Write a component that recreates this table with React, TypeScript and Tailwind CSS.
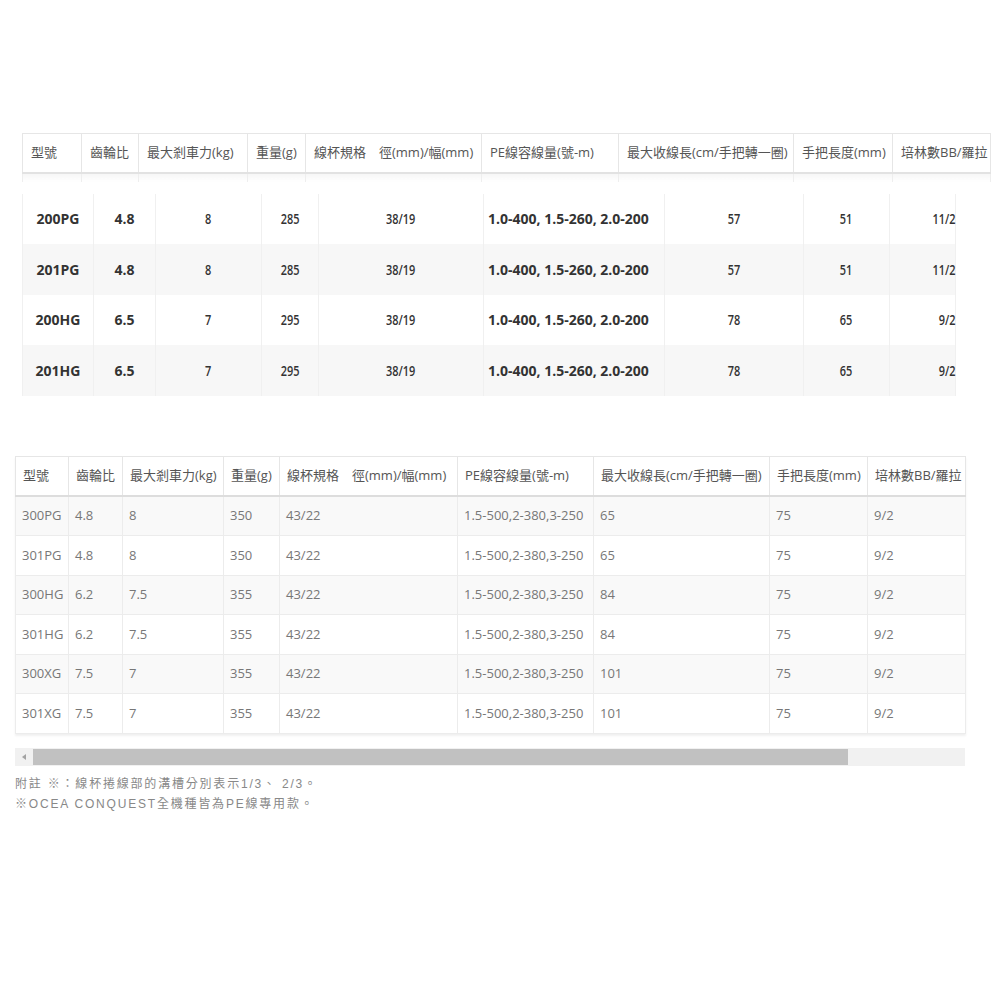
const cjk = "font-['Open_Sans','Noto_Sans_CJK_TC',sans-serif]"

const topHead = [
  { label: '型號', w: 'w-[59px]' },
  { label: '齒輪比', w: 'w-[57px]' },
  { label: '最大剎車力(kg)', w: 'w-[109px]' },
  { label: '重量(g)', w: 'w-[58px]' },
  { label: '線杯規格　徑(mm)/幅(mm)', w: 'w-[176px]' },
  { label: 'PE線容線量(號-m)', w: 'w-[137px]' },
  { label: '最大收線長(cm/手把轉一圈)', w: 'w-[175px]' },
  { label: '手把長度(mm)', w: 'w-[99px]' },
  { label: '培林數BB/羅拉', w: 'w-[98px]' },
]

const topCols = ['w-[71px]', 'w-[62px]', 'w-[106px]', 'w-[57px]', 'w-[165px]', 'w-[181px]', 'w-[139px]', 'w-[86px]', 'w-[66px]']

const topRows = [
  ['200PG', '4.8', '8', '285', '38/19', '1.0-400, 1.5-260, 2.0-200', '57', '51', '11/2'],
  ['201PG', '4.8', '8', '285', '38/19', '1.0-400, 1.5-260, 2.0-200', '57', '51', '11/2'],
  ['200HG', '6.5', '7', '295', '38/19', '1.0-400, 1.5-260, 2.0-200', '78', '65', '9/2'],
  ['201HG', '6.5', '7', '295', '38/19', '1.0-400, 1.5-260, 2.0-200', '78', '65', '9/2'],
]

const bottomHead = [
  { label: '型號', w: 'w-[53px]' },
  { label: '齒輪比', w: 'w-[54px]' },
  { label: '最大剎車力(kg)', w: 'w-[101px]' },
  { label: '重量(g)', w: 'w-[56px]' },
  { label: '線杯規格　徑(mm)/幅(mm)', w: 'w-[178px]' },
  { label: 'PE線容線量(號-m)', w: 'w-[136px]' },
  { label: '最大收線長(cm/手把轉一圈)', w: 'w-[176px]' },
  { label: '手把長度(mm)', w: 'w-[98px]' },
  { label: '培林數BB/羅拉', w: 'w-[98px]' },
]

const bottomRows = [
  ['300PG', '4.8', '8', '350', '43/22', '1.5-500,2-380,3-250', '65', '75', '9/2'],
  ['301PG', '4.8', '8', '350', '43/22', '1.5-500,2-380,3-250', '65', '75', '9/2'],
  ['300HG', '6.2', '7.5', '355', '43/22', '1.5-500,2-380,3-250', '84', '75', '9/2'],
  ['301HG', '6.2', '7.5', '355', '43/22', '1.5-500,2-380,3-250', '84', '75', '9/2'],
  ['300XG', '7.5', '7', '355', '43/22', '1.5-500,2-380,3-250', '101', '75', '9/2'],
  ['301XG', '7.5', '7', '355', '43/22', '1.5-500,2-380,3-250', '101', '75', '9/2'],
]

function Narrow({ children }: { children: string }) {
  return <span className="inline-block scale-x-[0.78] font-semibold">{children}</span>
}

function TopTable() {
  return (
    <div className="ml-[22px] w-[968px]">
      <table className={`w-full table-fixed border-collapse ${cjk} text-[13px] text-[#555]`}>
        <colgroup>
          {topHead.map(h => (
            <col key={h.label} className={h.w} />
          ))}
        </colgroup>
        <thead>
          <tr className="h-[39px] border-t border-[#e6e6e6] border-b-2 border-b-[#e2e2e2]">
            {topHead.map(h => (
              <th key={h.label} className="border-x border-[#e6e6e6] pl-2 text-left font-normal whitespace-nowrap">
                {h.label}
              </th>
            ))}
          </tr>
        </thead>
        <tbody>
          <tr className="h-[9px]">
            {topHead.map(h => (
              <td key={h.label} className="border-x border-[#eeeeee] bg-gradient-to-b from-[#f6f6f6] to-white" />
            ))}
          </tr>
        </tbody>
      </table>

      <table className={`mt-[12px] w-[933px] table-fixed border-collapse ${cjk} text-[14px] text-[#333]`}>
        <colgroup>
          {topCols.map((w, i) => (
            <col key={i} className={w} />
          ))}
        </colgroup>
        <tbody>
          {topRows.map((row, r) => (
            <tr key={row[0]} className={`h-[50.5px] ${r % 2 === 1 ? 'bg-[#f7f7f7]' : 'bg-white'}`}>
              {row.map((cell, c) => {
                const border = 'border-x border-[#f0f0f0]'
                if (c === 0 || c === 1)
                  return (
                    <td key={c} className={`${border} text-center font-bold`}>
                      {cell}
                    </td>
                  )
                if (c === 5)
                  return (
                    <td key={c} className={`${border} pl-1 text-left font-bold whitespace-nowrap`}>
                      {cell}
                    </td>
                  )
                if (c === 8)
                  return (
                    <td key={c} className={`${border} pr-0 text-right`}>
                      <span className="inline-block origin-right scale-x-[0.78] font-semibold">{cell}</span>
                    </td>
                  )
                return (
                  <td key={c} className={`${border} text-center`}>
                    <Narrow>{cell}</Narrow>
                  </td>
                )
              })}
            </tr>
          ))}
        </tbody>
      </table>
    </div>
  )
}

function BottomTable() {
  return (
    <div className="mt-[60px] ml-[15px] w-[950px]">
      <table className={`w-full table-fixed border-collapse ${cjk} text-[13px] shadow-[0_2px_2px_rgba(0,0,0,0.06)]`}>
        <colgroup>
          {bottomHead.map(h => (
            <col key={h.label} className={h.w} />
          ))}
        </colgroup>
        <thead>
          <tr className="h-[40px] border-t border-[#e6e6e6] border-b-2 border-b-[#dddddd] bg-white text-[#555]">
            {bottomHead.map(h => (
              <th key={h.label} className="border-x border-[#e6e6e6] pl-[7px] text-left font-normal whitespace-nowrap">
                {h.label}
              </th>
            ))}
          </tr>
        </thead>
        <tbody className="text-[#777]">
          {bottomRows.map((row, r) => (
            <tr key={row[0]} className={`h-[39.5px] border-b border-[#ececec] ${r % 2 === 0 ? 'bg-[#f9f9f9]' : 'bg-white'}`}>
              {row.map((cell, c) => (
                <td key={c} className="border-x border-[#ececec] pl-[6px] text-left whitespace-nowrap">
                  {cell}
                </td>
              ))}
            </tr>
          ))}
        </tbody>
      </table>

      <div className="mt-[14px] flex h-[18px] items-center bg-[#f1f1f1]">
        <div className="flex w-[18px] justify-center">
          <span className="h-0 w-0 border-y-[3px] border-r-[4px] border-y-transparent border-r-[#a3a3a3]" />
        </div>
        <div className="h-[16px] w-[815px] bg-[#c1c1c1]" />
      </div>

      <div className="mt-[8px] font-['Liberation_Sans','Noto_Sans_CJK_TC',sans-serif] text-[12px] leading-[20px] tracking-[1.8px] text-[#888]">
        <p>附註 ※：線杯捲線部的溝槽分別表示1/3、 2/3。</p>
        <p>※OCEA CONQUEST全機種皆為PE線專用款。</p>
      </div>
    </div>
  )
}

export default function App() {
  return (
    <div className="min-h-[1000px] w-[1000px] bg-white pt-[133px]">
      <TopTable />
      <BottomTable />
    </div>
  )
}
